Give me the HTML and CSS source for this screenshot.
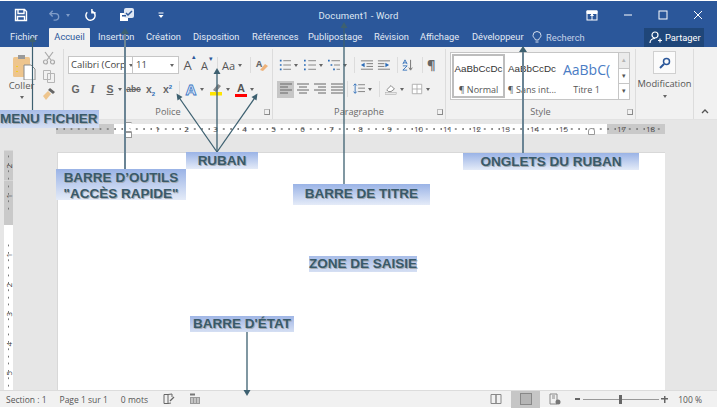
FILE: index.html
```html
<!DOCTYPE html>
<html lang="fr">
<head>
<meta charset="utf-8">
<title>Document1 - Word</title>
<link rel="stylesheet" href="styles.css">
</head>
<body>
<div class="app">
  <header class="titlebar">
    <div class="qat">
      <svg class="ic save" viewBox="0 0 14 14"><path d="M1.500 1.500h9l2 2v9h-11z M4 1.500v4h6v-4 M3.500 12.500v-4h7v4" fill="none" stroke="#fff" stroke-width="1.400"/></svg>
      <svg class="ic undo" viewBox="0 0 14 14"><path d="M5 2 2 5l3 3M2 5h6a3.500 3.500 0 0 1 0 7H6" fill="none" stroke="#7f9cc8" stroke-width="1.500"/></svg>
      <span class="tcaret dim"></span>
      <svg class="ic redo" viewBox="0 0 14 14"><path d="M9 2.500a5 5 0 1 1-5.500 1M8.500 0v4h4" fill="none" stroke="#fff" stroke-width="1.600"/></svg>
      <svg class="ic touch" viewBox="0 0 16 16"><rect x="1" y="6" width="8" height="8" fill="#fff"/><rect x="5" y="1" width="10" height="10" rx="2" fill="#dfe7f3"/><path d="m7 6 2 2 4-4" fill="none" stroke="#2b579a" stroke-width="1.500"/><path d="M3 8h4v1.500H3z" fill="#2b579a"/></svg>
      <svg class="ic custom" viewBox="0 0 6 7"><path d="M.5 1h5" stroke="#fff"/><path d="M.5 3h5L3 6z" fill="#fff"/></svg>
    </div>
    <div class="doc-title">Document1 - Word</div>
    <div class="winctl">
      <svg class="ic rd" viewBox="0 0 12 11"><rect x="1" y="1" width="10" height="9" fill="none" stroke="#fff"/><path d="M1 1h10v2.500H1zM6 1v9M4.500 6 6 4l1.500 2" fill="#fff" stroke="#fff"/></svg>
      <svg class="ic min" viewBox="0 0 10 10"><path d="M1 5h8" stroke="#fff"/></svg>
      <svg class="ic max" viewBox="0 0 10 10"><rect x="1" y="1" width="8" height="8" fill="none" stroke="#fff"/></svg>
      <svg class="ic close" viewBox="0 0 10 10"><path d="m1 1 8 8M9 1 1 9" stroke="#fff"/></svg>
    </div>
  </header>

  <nav class="tabs">
    <span class="tab first">Fichier</span>
    <span class="tab active">Accueil</span>
    <span class="tab">Insertion</span>
    <span class="tab">Création</span>
    <span class="tab">Disposition</span>
    <span class="tab">Références</span>
    <span class="tab">Publipostage</span>
    <span class="tab">Révision</span>
    <span class="tab">Affichage</span>
    <span class="tab">Développeur</span>
    <span class="tab search">
      <svg class="ic bulb" viewBox="0 0 10 13"><path d="M3.500 9C3 7 1 6.500 1 4.500a4 4 0 0 1 8 0C9 6.500 7 7 6.500 9zM3.500 11h3" fill="none" stroke="#d5dfee"/></svg>
      <span class="search-t">Recherch</span>
    </span>
    <span class="share">
      <svg class="ic user" viewBox="0 0 13 13"><circle cx="6" cy="4" r="3" fill="none" stroke="#fff" stroke-width="1.200"/><path d="M1 12c0-3 2-4.500 5-4.500M9 9.500h4M11 7.500v4" fill="none" stroke="#fff" stroke-width="1.200"/></svg>
      Partager
    </span>
  </nav>

  <section class="ribbon">
    <div class="group g-clip">
      <div class="clip-main">
        <svg class="ic paste" viewBox="0 0 24 26"><rect x="1" y="3" width="17" height="20" rx="1.500" fill="#eec58d"/><rect x="6" y="1" width="7" height="4" fill="#9a9a9a"/><path d="M12 11h7l4 4v11H12z" fill="#fff" stroke="#8a8a8a"/><path d="M5 12v1M5 17v1" stroke="#f2d000" stroke-width="1.500"/></svg>
        <span class="clip-l">Coller</span>
        <span class="caret"></span>
      </div>
      <div class="clip-side">
        <svg class="ic s14" viewBox="0 0 14 14"><path d="M3 1l6 8M11 1 5 9" stroke="#a9a9a9" stroke-width="1.200"/><circle cx="3.500" cy="11" r="2" fill="none" stroke="#a9a9a9" stroke-width="1.200"/><circle cx="10.500" cy="11" r="2" fill="none" stroke="#a9a9a9" stroke-width="1.200"/></svg>
        <svg class="ic s14" viewBox="0 0 14 14"><path d="M1.500 1.500h7v9h-7zM5.500 4.500h7v9h-7z" fill="#f1f1f1" stroke="#b5b5b5"/></svg>
        <svg class="ic s14" viewBox="0 0 14 14"><path d="m8 1 5 4-2 2-5-4z" fill="#666"/><path d="M6 4 1 9l3 4 5-6z" fill="#eec58d"/></svg>
      </div>
    </div>

    <div class="group g-police">
      <div class="rows">
        <div class="row r1">
          <span class="select font">Calibri (Corp<i class="caret"></i></span>
          <span class="select size">11<i class="caret"></i></span>
          <span class="glyph big w17">A<sup class="up-b">▴</sup></span>
          <span class="glyph mid w17">A<sup class="up-b">▾</sup></span>
          <i class="sep ml4"></i>
          <span class="glyph aa ml4">Aa</span><i class="caret"></i>
          <i class="sep ml5"></i>
          <svg class="ic s14 ml4" viewBox="0 0 14 14"><text x="1" y="9" class="era">A</text><path d="m5 12 5-6 3 2-5 5z" fill="#eeb27a"/></svg>
        </div>
        <div class="row r2 r2-police">
          <span class="fmt b">G</span>
          <span class="fmt i">I</span>
          <span class="fmt u">S</span><i class="caret"></i>
          <span class="fmt strike">abc</span>
          <span class="fmt sc">x<sub>2</sub></span>
          <span class="fmt sc">x<sup>2</sup></span>
          <i class="sep ml3"></i>
          <span class="wordart ml5">A</span><i class="caret"></i>
          <svg class="ic s14 ml2" viewBox="0 0 14 14"><path d="m4 8 5-6 3 2-5 6z" fill="#8a8a8a"/><rect x="1" y="10" width="12" height="3.500" fill="#ffe500"/></svg><i class="caret"></i>
          <span class="color ml2">A</span><i class="caret"></i>
        </div>
      </div>
      <div class="glabel">Police<i class="launch"></i></div>
    </div>

    <div class="group g-para">
      <div class="rows">
        <div class="row r1">
          <svg class="ic s12 ml2" viewBox="0 0 14 14"><path d="M1 2h2M1 7h2M1 12h2" stroke="#2b6cb8" stroke-width="2"/><path d="M5 2h9M5 7h9M5 12h9" stroke="#777"/></svg><i class="caret"></i>
          <svg class="ic s12 ml3" viewBox="0 0 14 14"><path d="M1 1v2M1 6v2M1 11v2" stroke="#2b6cb8" stroke-width="2"/><path d="M5 2h9M5 7h9M5 12h9" stroke="#777"/></svg><i class="caret"></i>
          <svg class="ic s12 ml2" viewBox="0 0 14 14"><path d="M0 2h2M3 7h2M6 12h2" stroke="#2b6cb8" stroke-width="2"/><path d="M4 2h10M7 7h7M10 12h4" stroke="#777"/></svg><i class="caret"></i>
          <i class="sep ml4"></i>
          <svg class="ic s13 ml5" viewBox="0 0 14 14"><path d="M1 2h13M7 5h7M7 8h7M1 11h13" stroke="#777"/><path d="M1 6.500 5 4v5z" fill="#2b6cb8"/></svg>
          <svg class="ic s13 ml4" viewBox="0 0 14 14"><path d="M1 2h13M1 5h7M1 8h7M1 11h13" stroke="#777"/><path d="M13 6.500 9 4v5z" fill="#2b6cb8"/></svg>
          <i class="sep ml7"></i>
          <svg class="ic s12 ml4" viewBox="0 0 14 14"><path d="M1 6 3.500 1 6 6M1.500 4.500h4M1 8h5L1 13h5" fill="none" stroke="#2b6cb8"/><path d="M10 1v11M8 10l2 3 2-3" fill="none" stroke="#666"/></svg>
          <i class="sep ml8"></i>
          <span class="pil">¶</span>
        </div>
        <div class="row r2">
          <span class="al on"><svg class="ic s14" viewBox="0 0 14 14"><path d="M1 2h12M1 5h8M1 8h12M1 11h8" stroke="#666"/></svg></span>
          <span class="al"><svg class="ic s14" viewBox="0 0 14 14"><path d="M1 2h12M3 5h8M1 8h12M3 11h8" stroke="#666"/></svg></span>
          <span class="al"><svg class="ic s14" viewBox="0 0 14 14"><path d="M1 2h12M5 5h8M1 8h12M5 11h8" stroke="#666"/></svg></span>
          <span class="al"><svg class="ic s14" viewBox="0 0 14 14"><path d="M1 2h12M1 5h12M1 8h12M1 11h12" stroke="#666"/></svg></span>
          <i class="sep ml2"></i>
          <svg class="ic s12 ml5" viewBox="0 0 14 14"><path d="M6 2h8M6 6h8M6 10h8" stroke="#777"/><path d="M2.500 1v11M.5 3l2-2 2 2M.5 10l2 2 2-2" fill="none" stroke="#2b6cb8"/></svg><i class="caret"></i>
          <i class="sep ml4"></i>
          <svg class="ic s12 ml5" viewBox="0 0 14 14"><path d="M2 8 7 3l4 4-4 3H4z" fill="#fff" stroke="#777"/><rect y="11" width="13" height="2.500" fill="#e9e9e9" stroke="#999" stroke-width=".5"/></svg><i class="caret"></i>
          <svg class="ic s12 ml4" viewBox="0 0 14 14"><path d="M1.500 1.500h11v11h-11zM7 1.500v11M1.500 7h11" fill="#fff" stroke="#aaa"/></svg><i class="caret"></i>
        </div>
      </div>
      <div class="glabel">Paragraphe<i class="launch"></i></div>
    </div>

    <div class="group g-style">
      <div class="gallery-wrap">
        <div class="gallery">
          <div class="st sel"><span class="sample">AaBbCcDc</span><span class="sname">¶ Normal</span></div>
          <div class="st"><span class="sample">AaBbCcDc</span><span class="sname">¶ Sans int...</span></div>
          <div class="st"><span class="sample title1">AaBbC(</span><span class="sname">Titre 1</span></div>
        </div>
        <div class="scroll"><span class="sb off">▴</span><span class="sb">▾</span><span class="sb">▾</span></div>
      </div>
      <div class="glabel">Style<i class="launch"></i></div>
    </div>

    <div class="group g-mod">
      <span class="mod-btn"><svg class="ic s12" viewBox="0 0 12 12"><circle cx="7.500" cy="4.500" r="3" fill="none" stroke="#2b579a" stroke-width="1.500"/><path d="m5 7-4 4" stroke="#2b579a" stroke-width="2"/></svg></span>
      <span class="mod-l">Modification</span>
      <i class="caret"></i>
    </div>
    <div class="collapse"><svg class="ic chev" viewBox="0 0 8 5"><path d="m1 4 3-3 3 3" fill="none" stroke="#555" stroke-width="1.300"/></svg></div>
  </section>

  <div class="hruler">
    <div class="hr-strip">
      <span class="c off"></span><span class="c off"></span><span class="c"></span><span class="c">1</span><span class="c">2</span><span class="c">3</span><span class="c">4</span><span class="c">5</span><span class="c">6</span><span class="c">7</span><span class="c">8</span><span class="c">9</span><span class="c">10</span><span class="c">11</span><span class="c">12</span><span class="c">13</span><span class="c">14</span><span class="c">15</span><span class="c half"></span><span class="c off">17</span><span class="c off">18</span>
    </div>
  </div>

  <main class="workspace">
    <div class="vruler">
      <span class="v off">2</span><span class="v off">1</span><span class="v-gap off"></span><span class="v-gap"></span><span class="v">1</span><span class="v">2</span><span class="v">3</span><span class="v">4</span><span class="v">5</span>
    </div>
    <div class="page"></div>
  </main>

  <footer class="status">
    <span class="s-t sec">Section : 1</span>
    <span class="s-t pg">Page 1 sur 1</span>
    <span class="s-t wd">0 mots</span>
    <svg class="ic s12 st-a" viewBox="0 0 12 12"><path d="M1 1.500h4v9H1zM5 1.500 9 1v3M5 10.500l3-.5" fill="none" stroke="#666"/><path d="m7 8 4-4" stroke="#666" stroke-width="1.300"/></svg>
    <svg class="ic s12 st-b" viewBox="0 0 12 12"><rect x="1" y="4" width="10" height="7" fill="#999"/><path d="M1 1.500h5" stroke="#777" stroke-width="2"/><path d="M3 5v5M6 5v5M9 5v5" stroke="#eee"/></svg>
    <div class="s-right">
      <svg class="ic s12" viewBox="0 0 12 12"><path d="M1 1.500h5v9H1zM6 1.500h5v9H6z" fill="none" stroke="#888"/></svg>
      <span class="view-on"><svg class="ic s12" viewBox="0 0 12 12"><rect x=".5" y=".5" width="11" height="11" fill="#b5b5b5" stroke="#888"/></svg></span>
      <svg class="ic s12 web" viewBox="0 0 12 12"><path d="M1 1h7v10H1z" fill="none" stroke="#888"/><path d="M3 3h3M3 5h3" stroke="#888"/><circle cx="9" cy="9" r="2.500" fill="#777"/></svg>
      <span class="z-minus"></span>
      <span class="slider"><i class="thumb"></i></span>
      <span class="z-plus"></span>
      <span class="s-t pct">100 %</span>
    </div>
  </footer>
</div>

<i class="marker-left"></i>
<i class="marker-box"></i>
<i class="marker-right"></i>

<svg class="arrows" viewBox="0 0 718 409">
  <g stroke="#6a8494" stroke-width="2" fill="none">
    <path d="M125 170V32"/>
    <path d="M523 153V50"/>
  </g>
  <g stroke="#3d6070" fill="none">
    <path d="M32.500 111V40" stroke-width="1.200"/>
    <path d="M344 185V26" stroke-width="1.300"/>
    <path d="M217 152V72" stroke-width="1.300"/>
    <path d="M217 152 178 96" stroke-width="1.300"/>
    <path d="M217 152 256 96" stroke-width="1.300"/>
    <path d="M247 332V392" stroke-width="1.300"/>
  </g>
  <g fill="#3d6070">
    <path d="m32.500 36 3.500 6h-7z"/>
    <path d="m125 28 4 6h-8z"/>
    <path d="m344 22 3.500 6h-7z"/>
    <path d="m217 68 3.500 6h-7z"/>
    <path d="m176.500 93.500 6 3.500-5 3.500z"/>
    <path d="m257.500 93.500-6 3.500 5 3.500z"/>
    <path d="m523 46 4 6h-8z"/>
    <path d="m247 396-3.500-6h7z"/>
  </g>
</svg>

<div class="note n-menu">MENU FICHIER</div>
<div class="note n-qat">BARRE D’OUTILS<br>"ACCÈS RAPIDE"</div>
<div class="note n-ruban">RUBAN</div>
<div class="note n-titre">BARRE DE TITRE</div>
<div class="note n-onglets">ONGLETS DU RUBAN</div>
<div class="note n-zone">ZONE DE SAISIE</div>
<div class="note n-etat">BARRE D'ÉTAT</div>
</body>
</html>
```
FILE: styles.css
```css
* { box-sizing: border-box; }
html, body { margin: 0; height: 409px; overflow: hidden; background: #fff; }
body { position: relative; font-family: "Open Sans", "Liberation Sans", sans-serif; }
.app { margin: 1px 1px 0 0; height: 406px; display: flex; flex-direction: column; }
.ic { display: block; flex: none; }
i { font-style: normal; }

/* Title bar */
.titlebar { height: 27px; background: #2b579a; display: grid; grid-template-columns: 1fr auto 1fr; color: #dfe7f3; flex: none; }
.qat { display: flex; align-items: center; padding-bottom: 2px; }
.save { width: 14px; height: 14px; margin-left: 14px; }
.undo { width: 13px; height: 13px; margin-left: 20px; }
.tcaret { width: 0; height: 0; border: 2.500px solid transparent; border-top: 3px solid #7f9cc8; margin: 3px 0 0 5px; }
.redo { width: 13px; height: 13px; margin-left: 14px; }
.touch { width: 16px; height: 16px; margin-left: 22px; }
.custom { width: 6px; height: 7px; margin-left: 23px; }
.doc-title { font: 9.500px/30px Roboto, sans-serif; letter-spacing: .1px; }
.winctl { display: flex; align-items: center; justify-content: flex-end; padding-bottom: 2px; }
.rd { width: 12px; height: 11px; margin-right: 25px; }
.min, .max, .close { width: 10px; height: 10px; }
.min { margin-right: 25px; }
.max { margin-right: 25px; }
.close { margin-right: 14px; }

/* Tabs */
.tabs { height: 19px; background: #2b579a; display: grid; grid-template-columns: 49px 49px 48px 47px 59px 56px 66px 46px 52px 60px 100px 1fr; font: 9.300px Roboto, sans-serif; color: #e3eaf5; flex: none; }
.tab { line-height: 18px; white-space: nowrap; }
.tab.first { padding-left: 10px; }
.tab.active { background: #f1f1f1; color: #2b579a; width: 41px; border-radius: 1px 1px 0 0; text-align: center; }
.search { display: flex; align-items: center; gap: 4px; }
.bulb { width: 10px; height: 13px; }
.search-t { color: #c3d1e6; }
.share { justify-self: end; margin-right: 13px; width: 60px; background: #1f4679; color: #fff; display: flex; align-items: center; gap: 3px; padding-left: 5px; }
.user { width: 13px; height: 13px; }

/* Ribbon */
.ribbon { height: 73px; background: #f1f1f1; display: flex; color: #555; flex: none; border-bottom: 1px solid #e2e2e2; }
.group { height: 70px; margin-top: 2px; border-right: 1px solid #dcdcdc; position: relative; flex: none; }
.g-clip { width: 64px; display: flex; }
.clip-main { width: 43px; display: flex; flex-direction: column; align-items: center; padding-top: 5px; }
.paste { width: 24px; height: 26px; margin-left: 4px; }
.clip-l { font-size: 9.500px; line-height: 12px; color: #5a5a5a; }
.clip-main .caret { margin: 4px 0 0; }
.clip-side { display: flex; flex-direction: column; gap: 4px; padding-top: 2px; margin-left: -1px; }
.s14 { width: 14px; height: 14px; }
.s13 { width: 13px; height: 13px; }
.s12 { width: 12px; height: 12px; }
.g-police { width: 209px; display: flex; flex-direction: column; }
.g-para { width: 173px; display: flex; flex-direction: column; }
.rows { flex: 1; padding-left: 4px; }
.row { display: flex; align-items: center; }
.r1 { height: 20px; margin-top: 6px; }
.r2 { height: 18px; margin-top: 5px; }
.r2-police { margin-left: -1px; }
.select { height: 18px; background: #fff; border: 1px solid #c6c6c6; font-size: 9.500px; color: #444; line-height: 16px; padding-left: 2px; display: flex; align-items: center; justify-content: space-between; }
.font { width: 65px; overflow: hidden; white-space: nowrap; }
.size { width: 47px; margin-left: -1px; padding-left: 3px; }
.caret { display: inline-block; flex: none; width: 0; height: 0; border: 2.500px solid transparent; border-top: 3px solid #666; border-bottom: 0; margin: 1px 3px 0 3px; }
.select .caret { margin-right: 4px; }
.glyph { font-family: "Open Sans", sans-serif; color: #555; position: relative; display: block; text-align: center; }
.big { font-size: 13px; }
.mid { font-size: 11px; }
.w17 { width: 17px; }
.up-b { position: absolute; top: -3px; right: 0; font-size: 7px; color: #2b579a; line-height: 8px; }
.aa { font-size: 11px; }
.sep { display: block; flex: none; width: 1px; height: 16px; background: #dcdcdc; }
.ml2 { margin-left: 2px; } .ml3 { margin-left: 3px; } .ml4 { margin-left: 4px; } .ml5 { margin-left: 5px; } .ml7 { margin-left: 7px; } .ml8 { margin-left: 8px; }
.era { font: 700 9px "Open Sans", sans-serif; fill: #666; }
.fmt { width: 17px; text-align: center; font: 700 10.500px "Liberation Sans", sans-serif; color: #666; flex: none; }
.fmt.i { font-style: italic; font-family: "Liberation Serif", serif; font-size: 12px; }
.fmt.u { text-decoration: underline; width: 10px; margin-left: 4px; }
.fmt.strike { text-decoration: line-through; font-size: 8.500px; }
.fmt sub, .fmt sup { font-size: 6px; color: #2b6cb8; line-height: 0; }
.wordart { font: 700 15px "Open Sans", sans-serif; color: #dbe7f8; -webkit-text-stroke: .8px #3b78c4; line-height: 16px; width: 12px; text-align: center; }
.color { font: 700 11px "Liberation Sans", sans-serif; color: #555; border-bottom: 3px solid #f00; line-height: 12px; width: 12px; text-align: center; }
.pil { font-size: 13px; color: #666; margin-left: 4px; font-weight: 700; }
.al { width: 17px; height: 17px; display: flex; align-items: center; justify-content: center; flex: none; }
.al.on { background: #c6c6c6; }
.glabel { height: 14px; font-size: 9.200px; line-height: 14px; text-align: center; color: #6a6a6a; position: relative; }
.launch { position: absolute; right: 2px; top: 4px; width: 6px; height: 6px; border: 1px solid #8a8a8a; border-top-color: #bbb; border-left-color: #bbb; }

/* Styles */
.g-style { width: 190px; display: flex; flex-direction: column; }
.gallery-wrap { flex: 1; display: flex; padding: 3px 0 0 4px; }
.gallery { width: 169px; height: 48px; background: #fff; border: 1px solid #c6c6c6; display: flex; padding: 1px; }
.st { flex: 0 0 54px; display: flex; flex-direction: column; align-items: center; overflow: hidden; padding-top: 8px; }
.st:last-child { flex: 0 0 55px; }
.st.sel { border: 2px solid #bdbdbd; padding-top: 6px; flex: 0 0 53px; }
.sample { font: 9.800px "Liberation Sans", sans-serif; color: #333; white-space: nowrap; line-height: 14px; height: 16px; }
.title1 { font-size: 14px; color: #4a7cc4; font-family: "Open Sans", sans-serif; line-height: 16px; }
.sname { font-size: 9px; color: #555; line-height: 12px; margin-top: 6px; white-space: nowrap; }
.scroll { width: 11px; height: 48px; display: flex; flex-direction: column; border: 1px solid #c6c6c6; border-left: 0; }
.sb { flex: 1; background: #fff; border-bottom: 1px solid #c6c6c6; font-size: 7px; color: #555; text-align: center; line-height: 14px; }
.sb.off { background: #ebebeb; color: #b5b5b5; }
.sb:last-child { border-bottom: 0; }

.g-mod { width: 58px; display: flex; flex-direction: column; align-items: center; }
.mod-btn { width: 23px; height: 23px; margin-top: 2px; background: #fbfbfb; border: 1px solid #d0d0d0; display: flex; align-items: center; justify-content: center; }
.mod-l { font-size: 9.300px; line-height: 12px; margin-top: 4px; color: #555; }
.g-mod .caret { margin-top: 5px; }
.collapse { flex: 1; display: flex; align-items: flex-end; justify-content: center; padding-bottom: 5px; }
.chev { width: 8px; height: 5px; margin-left: -1px; }

/* Horizontal ruler */
.hruler { height: 15px; background: #e6e6e6; padding: 4px 0 0 56px; flex: none; }
.hr-strip { width: 609px; height: 10px; display: flex; background: #fff; font: 8px/10px "Open Sans", sans-serif; color: #444; }
.c { flex: 0 0 29px; text-align: center; background: radial-gradient(circle at 1px 5px, #777 .6px, transparent 1px) 0 0 / 7.250px 10px; }
.c.off { background-color: #c9c9c9; }
.c.half { background-color: #fff; }

/* Workspace */
.workspace { flex: 1; background: #e6e6e6; display: flex; padding: 16px 52px 0 4px; min-height: 0; }
.vruler { width: 9px; background: #fff; display: flex; flex-direction: column; align-items: center; font: 8px/9px "Open Sans", sans-serif; color: #333; flex: none; }
.v { flex: 0 0 29.500px; writing-mode: vertical-rl; transform: rotate(180deg); text-align: center; width: 9px; background: radial-gradient(circle at 4.500px 2px, #777 .6px, transparent 1px) 0 0 / 9px 7.400px; }
.v.off { background-color: #c9c9c9; }
.v-gap { flex: 0 0 15px; width: 9px; }
.v-gap.off { background: #c9c9c9; }
.page { flex: 1; margin: 1px 0 0 44px; background: #fff; border-left: 1px solid #d8d8d8; border-top: 1px solid #d8d8d8; }

/* Status bar */
.status { height: 17px; background: #f1f1f1; border-top: 1px solid #dcdcdc; display: flex; align-items: center; font-size: 8.500px; color: #555; flex: none; }
.s-t { white-space: nowrap; }
.sec { margin-left: 6px; }
.pg { margin-left: 13px; }
.wd { margin-left: 13px; }
.st-a { margin-left: 15px; }
.st-b { margin-left: 14px; }
.s-right { margin-left: auto; display: flex; align-items: center; }
.view-on { width: 29px; height: 17px; background: #c6c6c6; display: flex; align-items: center; justify-content: center; margin-left: 9px; }
.web { margin-left: 9px; }
.z-minus { width: 5px; height: 2px; background: #666; margin-left: 14px; }
.slider { width: 76px; height: 1px; background: #999; margin-left: 3px; position: relative; }
.thumb { position: absolute; left: 36px; top: -4px; width: 3px; height: 9px; background: #666; }
.z-plus { width: 7px; height: 7px; margin-left: 2px; background: linear-gradient(#666, #666) center / 7px 1.500px no-repeat, linear-gradient(#666, #666) center / 1.500px 7px no-repeat; }
.pct { margin: 0 15px 0 10px; }

/* Ruler markers, over the ruler */
.marker-left { position: absolute; left: 125px; top: 122px; width: 7px; height: 10px; background: #fff; border: 1px solid #999; clip-path: polygon(0 0, 100% 0, 50% 50%, 100% 100%, 0 100%, 50% 50%); }
.marker-box { position: absolute; left: 125px; top: 132px; width: 7px; height: 6px; background: #fff; border: 1px solid #999; }
.marker-right { position: absolute; left: 588px; top: 128px; width: 7px; height: 7px; background: #fff; border: 1px solid #999; border-radius: 3px 3px 0 0; }

/* Annotations over the screenshot */
.arrows { position: absolute; left: 0; top: 0; width: 718px; height: 409px; pointer-events: none; }
.note { position: absolute; background: linear-gradient(#9ab3e6, #e4ebf8); color: #38596a; font: 700 13.500px/15px "Liberation Sans", sans-serif; text-align: center; text-shadow: 1px 1px 0 #a4a9ae; white-space: nowrap; }
.n-menu { left: 0; top: 110px; width: 99px; height: 18px; line-height: 18px; text-align: left; background: linear-gradient(#a8bde8, #d5dff3); }
.n-qat { left: 56px; top: 169px; width: 130px; height: 31px; padding-top: 1px; line-height: 16px; }
.n-ruban { left: 186px; top: 152px; width: 72px; height: 17px; line-height: 17px; }
.n-titre { left: 293px; top: 184px; width: 137px; height: 21px; line-height: 20px; }
.n-onglets { left: 463px; top: 153px; width: 176px; height: 17px; line-height: 17px; }
.n-zone { left: 309px; top: 256px; width: 108px; height: 16px; line-height: 16px; background: linear-gradient(#a8bde8, #d5dff3); }
.n-etat { left: 190px; top: 316px; width: 104px; height: 16px; line-height: 16px; background: linear-gradient(#a0b6e6, #d5dff3); }
```
